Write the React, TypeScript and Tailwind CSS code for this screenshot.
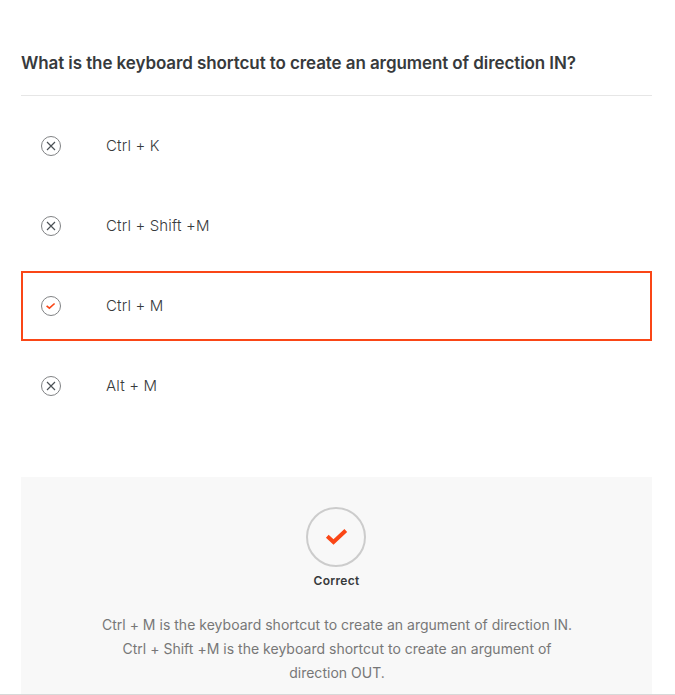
import React from "react";

const options = [
  { label: "Ctrl + K", correct: false },
  { label: "Ctrl + Shift +M", correct: false },
  { label: "Ctrl + M", correct: true },
  { label: "Alt + M", correct: false },
];

function OptionIcon({ correct }: { correct: boolean }) {
  return (
    <svg className="h-[22px] w-[22px] shrink-0" viewBox="0 0 22 22" fill="none">
      <circle cx="11" cy="11" r="9.5" stroke="#808284" strokeWidth="1" />
      {correct ? (
        <path d="M6.6 10.8 9.4 13.2 14.6 8.5" stroke="#fa4616" strokeWidth="1.6" />
      ) : (
        <path d="M7 7l8 8M15 7l-8 8" stroke="#4b5155" strokeWidth="1.15" />
      )}
    </svg>
  );
}

export default function App() {
  return (
    <main className="flex h-[695px] w-[675px] flex-col overflow-hidden border-b border-[#d8d8d8] bg-white pl-[21px] pr-[23px] font-['Inter',sans-serif]">
      <h1 className="mt-[49px] h-[46px] whitespace-nowrap text-[17px] font-semibold leading-[28px] tracking-[-0.09px] text-[#373a3c]">
        What is the keyboard shortcut to create an argument of direction IN?
      </h1>
      <div className="h-px shrink-0 bg-[#e6e6e6]" />
      <ul className="mt-[15px] flex flex-col gap-[10px]">
        {options.map((o) => (
          <li
            key={o.label}
            className={`flex h-[70px] items-center border-2 pl-[17px] ${o.correct ? "border-[#fa4616]" : "border-transparent"}`}
          >
            <OptionIcon correct={o.correct} />
            <span className="ml-[44px] text-[15px] font-light leading-6 tracking-[0.15px] text-[#373a3c]">{o.label}</span>
          </li>
        ))}
      </ul>
      <section className="mt-[56px] flex grow flex-col items-center bg-[#f8f8f8] pt-[30px]">
        <svg className="mr-px h-[60px] w-[60px] shrink-0" viewBox="0 0 60 60" fill="none">
          <circle cx="30" cy="30" r="29" stroke="#cccccc" strokeWidth="2" />
          <path d="M21.3 29.3 27.5 35 39.8 23.5" stroke="#fa4616" strokeWidth="4" />
        </svg>
        <strong className="mt-[4px] text-[12px] font-semibold leading-5 tracking-[0.3px] text-[#373a3c]">Correct</strong>
        <p className="mt-[22px] whitespace-nowrap pl-px text-center text-[14px] leading-6 tracking-[0.02px] text-[#777777]">
          Ctrl + M is the keyboard shortcut to create an argument of direction IN.
          <br />
          Ctrl + Shift +M is the keyboard shortcut to create an argument of
          <br />
          direction OUT.
        </p>
      </section>
    </main>
  );
}
